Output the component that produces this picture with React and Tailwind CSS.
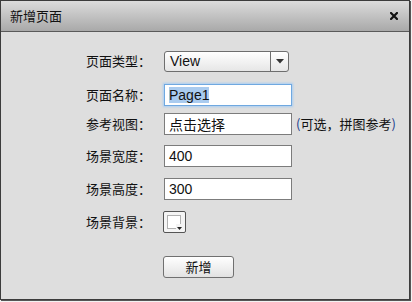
import React from 'react';

const cjk = { fontFamily: '"Noto Sans CJK SC", "Liberation Sans", sans-serif' };
const latin = { fontFamily: '"Liberation Sans", Arial, "Noto Sans CJK SC", sans-serif' };

const Label = ({ children }) => (
  <div className="w-[151px] pr-[1px] text-right text-[13px] leading-[22px] text-[#111]" style={cjk}>
    {children}
  </div>
);

const TextBox = ({ children, focused }) => (
  <div
    className={`w-[128px] h-[22px] bg-white flex items-center px-[4px] text-[14px] text-[#111] ${
      focused ? 'border border-[#6fa8e0] shadow-[0_0_2px_1px_#a9cdf2]' : 'border border-[#7c7c7c]'
    }`}
    style={latin}
  >
    {children}
  </div>
);

export default function App() {
  return (
    <div className="w-[412px] h-[302px] bg-[#f2f2f2]">
      <div className="w-[410px] h-[300px] border border-[#3c3c3c] shadow-[1px_1px_0_0_#555] bg-[#dedede] flex flex-col">
        {/* Title bar */}
        <div className="h-[31px] flex items-center justify-between pl-[9px] pr-[11px] border-b border-[#5a5a5a] bg-gradient-to-b from-[#dcdcdc] to-[#a9a9a9]">
          <span className="text-[13px] text-[#111]" style={cjk}>新增页面</span>
          <svg width="8" height="8" viewBox="0 0 8 8">
            <path d="M1 1 L7 7 M7 1 L1 7" stroke="#111" strokeWidth="2.2" strokeLinecap="square" />
          </svg>
        </div>

        {/* Body */}
        <div className="flex flex-col pt-[18px]">
          <div className="flex items-center gap-[12px]">
            <Label>页面类型：</Label>
            <div className="w-[125px] h-[21px] flex rounded-[3px] border border-[#6e6e6e] bg-gradient-to-b from-[#ffffff] to-[#e6e6e6]">
              <div className="flex-1 flex items-center pl-[5px] text-[14px] text-[#111]" style={latin}>View</div>
              <div className="w-[18px] border-l border-[#6e6e6e] flex items-center justify-center">
                <svg width="8" height="5" viewBox="0 0 8 5"><path d="M0 0 H8 L4 4.5 Z" fill="#333" /></svg>
              </div>
            </div>
          </div>

          <div className="flex items-center gap-[12px] mt-[12px]">
            <Label>页面名称：</Label>
            <TextBox focused>
              <span className="bg-[#a9cbef] leading-[16px]">Page1</span>
            </TextBox>
          </div>

          <div className="flex items-center gap-[12px] mt-[7px]">
            <Label>参考视图：</Label>
            <TextBox><span style={cjk} className="text-[14px]">点击选择</span></TextBox>
            <span className="-ml-[8px] text-[13px] text-[#111]" style={cjk}>
              <span className="text-[#1a3b8a]">(</span>可选，拼图参考<span className="text-[#1a3b8a]">)</span>
            </span>
          </div>

          <div className="flex items-center gap-[12px] mt-[10px]">
            <Label>场景宽度：</Label>
            <TextBox>400</TextBox>
          </div>

          <div className="flex items-center gap-[12px] mt-[11px]">
            <Label>场景高度：</Label>
            <TextBox>300</TextBox>
          </div>

          <div className="flex items-center gap-[11px] mt-[11px]">
            <Label>场景背景：</Label>
            <div className="relative w-[23px] h-[22px] border border-[#555] rounded-[2px] bg-[#f4f4f4]">
              <div className="absolute left-[3px] top-[3px] w-[14px] h-[14px] bg-white border border-[#b0b0b0]" />
              <div className="absolute right-[2px] bottom-[2px] w-[7px] h-[6px] bg-[#f4f4f4] flex items-end justify-center">
                <svg width="5" height="3" viewBox="0 0 5 3"><path d="M0 0 H5 L2.5 3 Z" fill="#222" /></svg>
              </div>
            </div>
          </div>

          <div className="flex mt-[23px] pl-[162px]">
            <div className="w-[71px] h-[22px] rounded-[3px] border border-[#707070] bg-gradient-to-b from-[#ffffff] to-[#e2e2e2] flex items-center justify-center text-[13px] text-[#111]" style={cjk}>
              新增
            </div>
          </div>
        </div>
      </div>
    </div>
  );
}
